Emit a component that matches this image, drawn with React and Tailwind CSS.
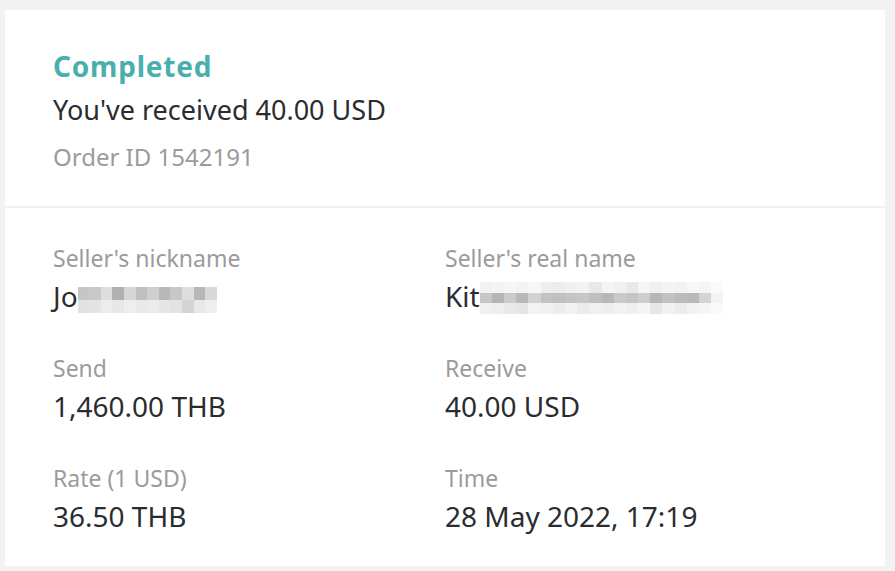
const nickMosaic = [
  ['#c6c6c6', '#e2e2e2'],
  ['#c9c9c9', '#e4e4e4'],
  ['#dedede', '#ececec'],
  ['#b0b0b0', '#e8e8e8'],
  ['#d6d6d6', '#eeeeee'],
  ['#bfbfbf', '#e9e9e9'],
  ['#cfcfcf', '#ebebeb'],
  ['#b8b8b8', '#e6e6e6'],
  ['#c8c8c8', '#e3e3e3'],
  ['#dedede', '#d4d4d4'],
  ['#b7b7b7', '#e8e8e8'],
  ['#d9d9d9', '#efefef'],
];

const realMosaic = [
  ['#f2f2f2', '#c6c6c6', '#f0f0f0'],
  ['#f4f4f4', '#b4b4b4', '#eeeeee'],
  ['#f6f6f6', '#cbcbcb', '#e9e9e9'],
  ['#f3f3f3', '#b9b9b9', '#e6e6e6'],
  ['#f7f7f7', '#d2d2d2', '#f4f4f4'],
  ['#efefef', '#c3c3c3', '#f1f1f1'],
  ['#ececec', '#c0c0c0', '#ededed'],
  ['#f0f0f0', '#c4c4c4', '#f2f2f2'],
  ['#f3f3f3', '#c7c7c7', '#ebebeb'],
  ['#e8e8e8', '#bfbfbf', '#f0f0f0'],
  ['#f5f5f5', '#b8b8b8', '#eeeeee'],
  ['#f1f1f1', '#cacaca', '#f3f3f3'],
  ['#e9e9e9', '#c5c5c5', '#efefef'],
  ['#f6f6f6', '#cdcdcd', '#f5f5f5'],
  ['#f0f0f0', '#b7b7b7', '#e7e7e7'],
  ['#f4f4f4', '#c2c2c2', '#f1f1f1'],
  ['#f2f2f2', '#bcbcbc', '#ececec'],
  ['#f7f7f7', '#b9b9b9', '#f3f3f3'],
  ['#f5f5f5', '#d4d4d4', '#f6f6f6'],
  ['#fafafa', '#f3f3f3', '#fafafa'],
];

// pixelated placeholder for the blurred-out names
function Mosaic({ cols, w, h, className }) {
  return (
    <span className={`flex ${className}`}>
      {cols.map((col, i) => (
        <span key={i} className="flex flex-col">
          {col.map((c, j) => (
            <span key={j} className="block" style={{ backgroundColor: c, width: w, height: h }} />
          ))}
        </span>
      ))}
    </span>
  );
}

function Field({ label, children }) {
  return (
    <div className="flex flex-col">
      <div className="text-[23px] leading-[30px] text-[#9b9b9b]">{label}</div>
      <div className="mt-[5px] h-[36px] text-[28px] leading-[36px] text-[#2a2d30]">{children}</div>
    </div>
  );
}

export default function App() {
  return (
    <div
      className="w-[895px] h-[571px] bg-[#f1f2f4] pt-[10px] pl-[5px] pr-[10px] pb-[5px]"
      style={{ fontFamily: '"Noto Sans", "Open Sans", sans-serif' }}
    >
      <div className="bg-white h-full flex flex-col">
        <div className="px-[48px] pt-[38px] h-[196px]">
          <div className="text-[28px] leading-[36px] font-bold tracking-[0.8px] text-[#4aafac]">Completed</div>
          <div className="mt-[8px] text-[27px] leading-[36px] text-[#2a2d30]">You've received 40.00 USD</div>
          <div className="mt-[13px] text-[24px] leading-[32px] text-[#9b9b9b]">Order ID 1542191</div>
        </div>
        <div className="h-[2px] bg-[#eef0f2]" />
        <div className="px-[48px] pt-[35px] grid grid-cols-[392px_1fr] gap-y-[39px]">
          <Field label="Seller's nickname">
            <div className="flex items-start">
              <span>Jo</span>
              <Mosaic cols={nickMosaic} w={11.6} h={13} className="mt-[9px]" />
            </div>
          </Field>
          <Field label="Seller's real name">
            <div className="flex items-start">
              <span>Kit</span>
              <Mosaic cols={realMosaic} w={12.2} h={10.7} className="mt-[4px]" />
            </div>
          </Field>
          <Field label="Send">1,460.00 THB</Field>
          <Field label="Receive">40.00 USD</Field>
          <Field label="Rate (1 USD)">36.50 THB</Field>
          <Field label="Time">28 May 2022, 17:19</Field>
        </div>
      </div>
    </div>
  );
}
